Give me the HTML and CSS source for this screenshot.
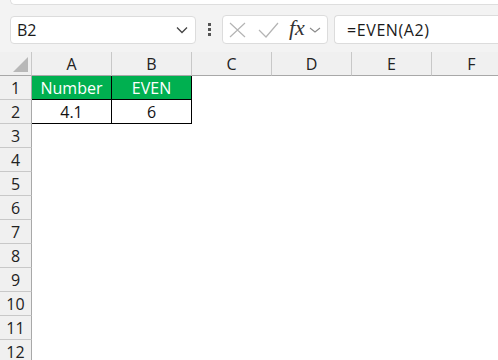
FILE: index.html
```html
<!DOCTYPE html>
<html lang="en">
<head>
  <meta charset="UTF-8">
  <meta name="viewport" content="width=device-width, initial-scale=1.0">
  <title>EVEN</title>
  <link rel="stylesheet" href="styles.css">
</head>
<body>
  <!-- ribbon edge -->
  <div class="ribbon-edge"></div>

  <!-- name box + formula bar -->
  <div class="formula-row">
    <div class="name-box">
      <span>B2</span>
      <svg class="chev" width="12" height="8" viewBox="0 0 12 8"><path d="M1 1.5 L6 6.5 L11 1.5" fill="none" stroke="#444" stroke-width="1.3"/></svg>
    </div>
    <div class="dots"><i></i><i></i><i></i></div>
    <div class="fx-box">
      <svg class="cancel" width="17" height="16" viewBox="0 0 17 16"><path d="M1 1 L16 15 M16 1 L1 15" fill="none" stroke="#b4b4b4" stroke-width="1.2"/></svg>
      <svg class="enter" width="21" height="16" viewBox="0 0 21 16"><path d="M1 8 L8 15 L20 1" fill="none" stroke="#b4b4b4" stroke-width="1.2"/></svg>
      <span class="fx">fx</span>
      <svg width="12" height="6" viewBox="0 0 12 6"><path d="M1 1 L6 5 L11 1" fill="none" stroke="#8a8a8a" stroke-width="1.1"/></svg>
    </div>
    <div class="formula">=EVEN(A2)</div>
  </div>

  <!-- sheet -->
  <div class="sheet">
    <div class="corner"><span class="tri"></span></div>
    <div class="col-head">A</div>
    <div class="col-head">B</div>
    <div class="col-head">C</div>
    <div class="col-head">D</div>
    <div class="col-head">E</div>
    <div class="col-head">F</div>

    <div class="row-head">1</div>
    <div class="cell head-cell">Number</div>
    <div class="cell head-cell">EVEN</div>
    <div class="cell"></div><div class="cell"></div><div class="cell"></div><div class="cell"></div>

    <div class="row-head">2</div>
    <div class="cell data-cell">4.1</div>
    <div class="cell data-cell">6</div>
    <div class="cell"></div><div class="cell"></div><div class="cell"></div><div class="cell"></div>

    <div class="row-head">3</div><div class="cell"></div><div class="cell"></div><div class="cell"></div><div class="cell"></div><div class="cell"></div><div class="cell"></div>
    <div class="row-head">4</div><div class="cell"></div><div class="cell"></div><div class="cell"></div><div class="cell"></div><div class="cell"></div><div class="cell"></div>
    <div class="row-head">5</div><div class="cell"></div><div class="cell"></div><div class="cell"></div><div class="cell"></div><div class="cell"></div><div class="cell"></div>
    <div class="row-head">6</div><div class="cell"></div><div class="cell"></div><div class="cell"></div><div class="cell"></div><div class="cell"></div><div class="cell"></div>
    <div class="row-head">7</div><div class="cell"></div><div class="cell"></div><div class="cell"></div><div class="cell"></div><div class="cell"></div><div class="cell"></div>
    <div class="row-head">8</div><div class="cell"></div><div class="cell"></div><div class="cell"></div><div class="cell"></div><div class="cell"></div><div class="cell"></div>
    <div class="row-head">9</div><div class="cell"></div><div class="cell"></div><div class="cell"></div><div class="cell"></div><div class="cell"></div><div class="cell"></div>
    <div class="row-head">10</div><div class="cell"></div><div class="cell"></div><div class="cell"></div><div class="cell"></div><div class="cell"></div><div class="cell"></div>
    <div class="row-head">11</div><div class="cell"></div><div class="cell"></div><div class="cell"></div><div class="cell"></div><div class="cell"></div><div class="cell"></div>
    <div class="row-head">12</div><div class="cell"></div><div class="cell"></div><div class="cell"></div><div class="cell"></div><div class="cell"></div><div class="cell"></div>
  </div>
</body>
</html>
```

FILE: styles.css
```css
body {
  margin: 0;
  background: #f3f3f3;
  font-family: "Open Sans", sans-serif;
  color: #222;
  overflow: hidden;
  width: 498px;
  height: 360px;
}
.ribbon-edge {
  height: 4px;
  margin-left: 10px;
  background: #fff;
  border: 1px solid #dedede;
  border-top: none;
  border-right: none;
  border-bottom-left-radius: 7px;
}
.formula-row {
  display: flex;
  align-items: center;
  height: 29px;
  margin-top: 10px;
  padding-left: 10px;
}
.name-box {
  width: 186px;
  height: 28px;
  box-sizing: border-box;
  background: #fff;
  border: 1px solid #dcdcdc;
  border-radius: 4px;
  display: flex;
  align-items: center;
  justify-content: space-between;
  padding: 0 7px 0 6px;
  font-size: 16px;
  color: #1a1a1a;
}
.dots {
  width: 26px;
  display: flex;
  flex-direction: column;
  align-items: center;
  gap: 2px;
}
.dots i {
  width: 3px;
  height: 3px;
  background: #555;
}
.fx-box {
  width: 106px;
  height: 29px;
  box-sizing: border-box;
  background: #fff;
  border: 1px solid #dcdcdc;
  border-radius: 4px;
  display: flex;
  align-items: center;
  padding-left: 6px;
}
.enter {
  margin-left: 12px;
}
.fx {
  font-family: "Liberation Serif", serif;
  font-style: italic;
  font-size: 22px;
  color: #333;
  margin: -4px 4px 0 10px;
}
.formula {
  flex: 1;
  margin-left: 6px;
  height: 29px;
  box-sizing: border-box;
  background: #fff;
  border: 1px solid #dcdcdc;
  border-right: none;
  border-radius: 4px 0 0 4px;
  display: flex;
  align-items: center;
  padding-left: 12px;
  font-size: 16px;
  letter-spacing: 0.6px;
  color: #1a1a1a;
}
.sheet {
  margin-top: 8px;
  display: grid;
  grid-template-columns: 32px repeat(6, 80px);
  grid-auto-rows: 24px;
  background: #fff;
  width: 512px;
}
.corner {
  background: #f0f0f0;
  border-right: 1px solid #c8c8c8;
  border-bottom: 1px solid #a8a8a8;
  position: relative;
}
.tri {
  position: absolute;
  right: 3px;
  bottom: 3px;
  width: 0;
  height: 0;
  border-left: 15px solid transparent;
  border-bottom: 15px solid #b8b8b8;
}
.col-head {
  background: #f0f0f0;
  border-right: 1px solid #c8c8c8;
  border-bottom: 1px solid #a8a8a8;
  display: flex;
  align-items: center;
  justify-content: center;
  font-size: 16px;
  color: #222;
}
.row-head {
  background: #f0f0f0;
  border-right: 1px solid #a8a8a8;
  border-bottom: 1px solid #c8c8c8;
  display: flex;
  align-items: center;
  justify-content: center;
  font-size: 16px;
  color: #222;
}
.cell {
  display: flex;
  align-items: center;
  justify-content: center;
  font-size: 16px;
}
.head-cell {
  background: #00b050;
  color: #fff;
  border-right: 1px solid #000;
  border-bottom: 1px solid #000;
}
.data-cell {
  color: #111;
  border-right: 1px solid #000;
  border-bottom: 1px solid #000;
}
```
